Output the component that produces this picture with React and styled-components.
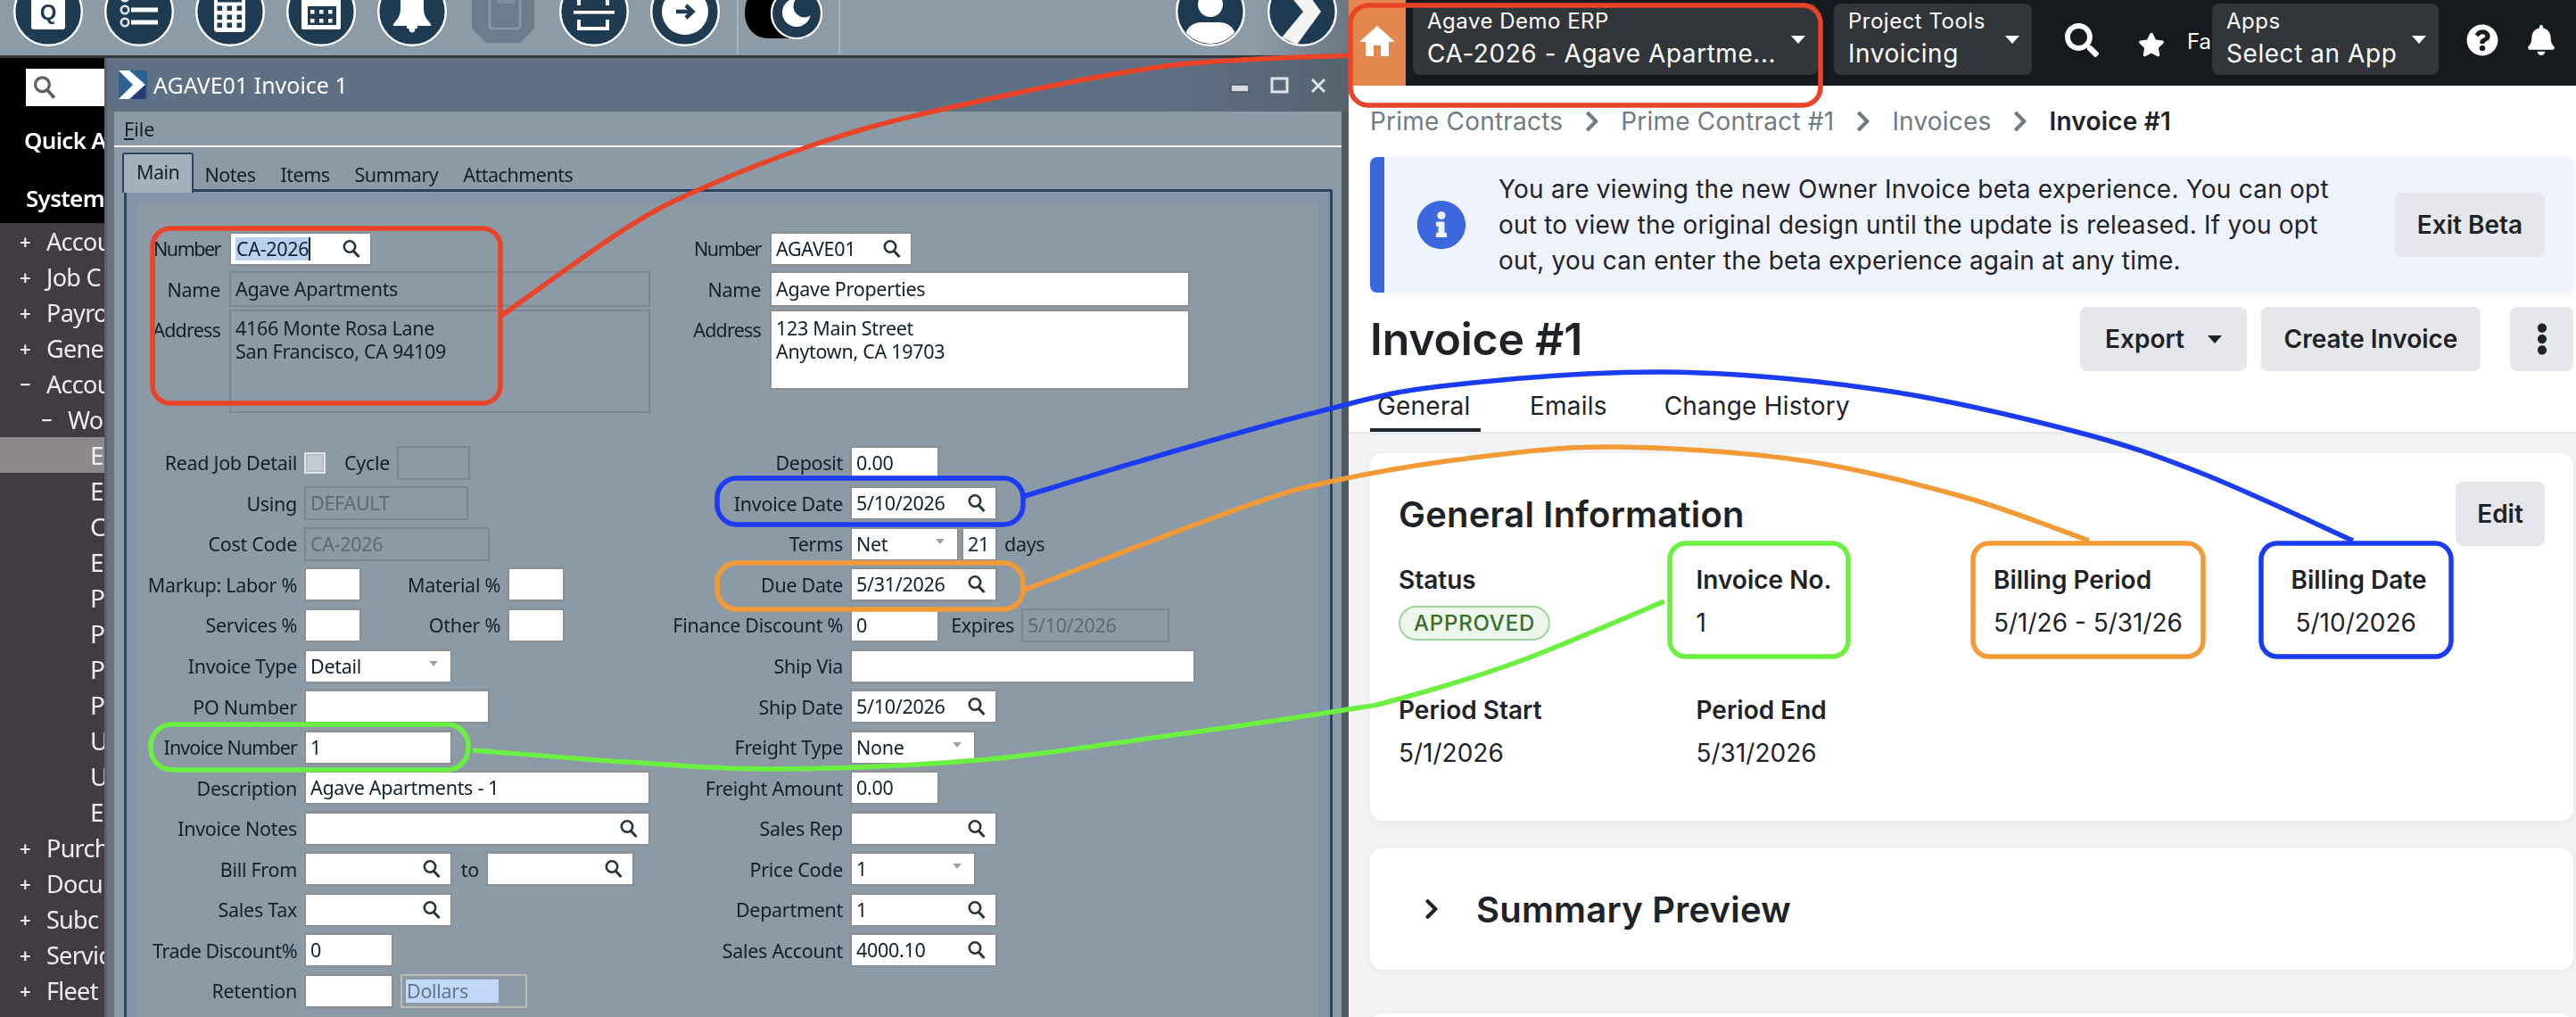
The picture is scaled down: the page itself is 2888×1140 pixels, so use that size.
import React from 'react';
import styled, { createGlobalStyle } from 'styled-components';
import { FaSearch, FaStar, FaQuestionCircle, FaBell, FaInfoCircle, FaChevronRight, FaEllipsisV } from 'react-icons/fa';

const Global = createGlobalStyle`
  html, body { margin: 0; padding: 0; background: #f2f3f5; }
  #root { width: 2888px; height: 1140px; }
  * { box-sizing: border-box; }
`;

const Page = styled.div`
  position: relative; width: 2888px; height: 1140px; overflow: hidden;
  display: grid; grid-template-columns: 1512px 1376px;
`;

/* ---------- legacy desktop ---------- */
const Legacy = styled.div`
  height: 1140px; display: flex; flex-direction: column; overflow: hidden;
  font-family: "Noto Sans", sans-serif; font-size: 21.5px; color: #10202c; background: #8c9aa6;
  filter: blur(0.45px);
`;
const Toolbar = styled.div`
  height: 65px; flex: none; display: flex; align-items: flex-start; padding: 0 13px 0 15px;
  background: linear-gradient(90deg, #8d9ba7 93%, #6a7783 100%);
  border-bottom: 3px solid #33383c; overflow: hidden;
`;
const RoundIcon = styled.svg`
  width: 78px; height: 78px; flex: none; margin-top: -26px; margin-right: ${p => p.$mr ?? 24}px;
`;
const Sep = styled.div`
  width: 2px; height: 60px; background: #a9b1b8; flex: none; margin-left: ${p => p.$ml}px; margin-right: ${p => p.$mr ?? 0}px;
`;
const Spacer = styled.div`flex: 1;`;
const Pill = styled.svg`width: 92px; height: 44px; flex: none;`;

const Body = styled.div`flex: 1; display: flex; min-height: 0;`;
const Side = styled.div`width: 120px; flex: none; background: #433b43; color: #f0ecf0; overflow: hidden; font-size: 27px; letter-spacing: -0.7px; border-right: 3px solid #59636b;`;
const SideTop = styled.div`height: 185px; background: #000; padding: 12px 0 0 29px; color: #fff; font-weight: 600; font-size: 26px; white-space: nowrap;`;
const SideSearch = styled.div`
  width: 89px; height: 42px; background: #fff; display: flex; align-items: center; padding-left: 7px; margin-bottom: 16px;
`;
const SideHead = styled.div`height: 65px; line-height: 44px; margin-left: ${p => p.$ml ?? 0}px;`;
const SideRow = styled.div`
  height: 40px; display: flex; align-items: center; white-space: nowrap; overflow: hidden;
  padding-left: ${p => p.$level * 24 + 22}px;
  background: ${p => (p.$sel ? '#8c888b' : 'transparent')};
`;
const Sign = styled.span`width: 30px; flex: none; font-size: 22px; font-weight: 600;`;
const Lvl3 = styled.span`margin-left: 7px; font-size: 28px;`;

const Win = styled.div`flex: 1; display: flex; flex-direction: column; min-width: 0;`;
const TitleBar = styled.div`
  height: 60px; flex: none; background: linear-gradient(90deg, #5f7084 85%, #55636f 100%); color: #fff; display: flex; align-items: center;
  padding-left: 13px; font-size: 25px;
`;
const Logo = styled.svg`width: 32px; height: 32px; margin-right: 7px; flex: none;`;
const WinCtl = styled.svg`width: 110px; height: 30px; margin-left: auto; margin-right: 24px;`;
const WinBody = styled.div`
  flex: 1; min-height: 0; margin-left: 0; background: #8c9aa6;
  border-left: 8px solid #66757f; border-right: 8px solid #4f5a62;
  display: flex; flex-direction: column;
`;
const Menu = styled.div`height: 40px; flex: none; padding-left: 11px; display: flex; align-items: center; border-bottom: 2px solid #f2f4f6;`;
const Under = styled.span`text-decoration: underline;`;
const TabRow = styled.div`height: 49px; flex: none; padding: 6px 0 0 9px; display: flex; position: relative; z-index: 1; margin-bottom: -2px; letter-spacing: -0.5px;`;
const WinTab = styled.div`
  display: flex; align-items: center; height: 45px; padding: ${p => (p.$on ? '0 14px 4px' : '4px 14px 0')};
  background: ${p => (p.$on ? '#a3b1bf' : 'transparent')};
  border: ${p => (p.$on ? '2px solid #2a4560' : 'none')};
  border-bottom: none; border-radius: 3px 3px 0 0;
  margin-right: ${p => (p.$on ? -2 : 0)}px;
`;
const Panel = styled.div`
  flex: 1; min-height: 0; margin: 0 10px 0 11px; background: #8495a8;
  border: 3px solid #2a4560; border-bottom: none; border-radius: 3px 3px 0 0; padding: 12px 14px 0 12px;
`;
const Form = styled.div`height: 100%; background: #8c9aa6; padding-top: 29px;`;
const Pair = styled.div`display: flex; height: ${p => p.$h}px;`;
const Col = styled.div`width: 600px; flex: none; --lw: ${p => p.$lw}px; --gap: ${p => p.$gap}px;`;
const Row = styled.div`
  height: ${p => p.$h ?? 45.55}px; display: flex; align-items: ${p => (p.$top ? 'flex-start' : 'center')}; gap: 8px; white-space: nowrap; letter-spacing: -0.3px;
`;
const Lab = styled.div`
  width: var(--lw); margin-right: calc(var(--gap) - 8px); flex: none; text-align: right; padding-top: ${p => p.$pt ?? 0}px;
  letter-spacing: ${p => p.$ls ?? -0.3}px;
`;
const InlineLab = styled.div`width: ${p => p.$w}px; flex: none; text-align: right; margin-left: ${p => p.$ml ?? 0}px;`;
const Input = styled.div`
  width: ${p => p.$w}px; height: ${p => p.$h ?? 38}px; flex: none; display: flex; align-items: ${p => (p.$multi ? 'flex-start' : 'center')};
  margin-left: ${p => p.$ml ?? 0}px;
  padding: ${p => (p.$multi ? '6px 5px' : '0 5px')}; line-height: 26px;
  background: ${p => (p.$off ? 'transparent' : '#fff')}; color: ${p => (p.$off && !p.$ink ? '#5d6a76' : '#10202c')};
  border: 2px solid ${p => (p.$off ? '#7d8791' : '#8b8f93')};
`;
const Selected = styled.span`
  background: ${p => p.$c}; padding: 0 ${p => p.$pr ?? 1}px 0 1px;
`;
const TextCaret = styled.span`display: inline-block; width: 2px; height: 26px; background: #10202c; margin-left: -1px;`;
const Drop = styled.span`
  margin-left: auto; margin-right: 9px; width: 0; height: 0; align-self: flex-start; margin-top: 11px;
  border-left: 5px solid transparent; border-right: 5px solid transparent; border-top: 6px solid #9aa3ac;
`;
const Glass = styled.svg`width: ${p => p.$s ?? 22}px; height: ${p => p.$s ?? 22}px; margin-left: ${p => (p.$flush ? 0 : 'auto')}; margin-right: ${p => p.$mr ?? 5}px; flex: none;`;
const GlassIcon = ({ mr, s, flush, c = '#26343e' }) => (
  <Glass viewBox="0 0 22 22" $mr={mr} $s={s} $flush={flush}>
    <circle cx="9" cy="8.5" r="6.2" fill="none" stroke={c} strokeWidth="2.6" />
    <line x1="13.4" y1="13.4" x2="19.5" y2="20" stroke={c} strokeWidth="3" />
  </Glass>
);
const Check = styled.div`width: 24px; height: 24px; background: #c3ccd2; border: 2px solid #dfe3e6; box-shadow: inset 0 0 0 2px #b4bcc3; flex: none;`;
const Dollars = styled(Input)`border-color: #b7bdb4; color: #66758c; padding-left: 4px;`;
const Unit = styled.span`flex: none;`;

const F = ({ label, ls, children }) => (
  <Row>
    <Lab $ls={ls}>{label}</Lab>
    {children}
  </Row>
);

/* ---------- portal ---------- */
const Portal = styled.div`
  height: 1140px; overflow: hidden; background: #fff; font-family: Inter, "Noto Sans", sans-serif; font-size: 28px; color: #1f2327;
`;
const TopNav = styled.div`height: 96px; background: #16191d; display: flex; align-items: flex-start; color: #fff;`;
const HomeTile = styled.div`width: 64px; height: 96px; background: #e4874f; display: flex; align-items: center; justify-content: center; flex: none;`;
const HomeGlyph = styled.svg`width: 40px; height: 34px; margin-top: -5px;`;
const NavSelect = styled.div`
  width: ${p => p.$w}px; margin-left: ${p => p.$ml}px; height: 80px; margin-top: 4px; flex: none; background: #32363a; border-radius: 8px;
  display: flex; align-items: center; justify-content: space-between; padding: 0 14px 0 16px;
`;
const NavText = styled.div`display: flex; flex-direction: column; white-space: nowrap; padding-bottom: 4px;`;
const NavSmall = styled.span`font-size: 24px; line-height: 36px; letter-spacing: 0.5px;`;
const NavBig = styled.span`font-size: 28px; line-height: 36px; letter-spacing: 0.55px;`;
const Caret = styled.span`
  width: 0; height: 0; flex: none; margin-left: ${p => p.$ml ?? 0}px;
  border-left: 8px solid transparent; border-right: 8px solid transparent; border-top: 9px solid ${p => p.$c ?? '#fff'};
`;
const NavIcon = styled.div`flex: none; margin-left: ${p => p.$ml}px; margin-top: ${p => p.$mt}px; display: flex; font-size: ${p => p.$s}px;`;
const Fa = styled.div`width: 28px; margin-left: 25px; margin-top: 32px; overflow: hidden; font-size: 24px; line-height: 30px; flex: none;`;

const Crumbs = styled.div`height: 80px; display: flex; align-items: center; padding-left: 24px; color: #6f7b83; white-space: nowrap;`;
const Crumb = styled.span`
  font-weight: ${p => (p.$cur ? 600 : 400)}; color: ${p => (p.$cur ? '#1f2327' : '#6f7b83')}; letter-spacing: 0.2px;
`;
const CrumbSep = styled.span`display: flex; margin: 0 19.5px; color: #6f7b83; font-size: 26px;`;
const Content = styled.div`padding: 0 3px 0 24px;`;
const Banner = styled.div`
  height: 152px; display: flex; align-items: center; background: #eff3fd; border-left: 16px solid #3b68dd; border-radius: 8px;
  padding: 0 32px 0 36px; box-shadow: 0 2px 10px rgba(40, 50, 70, 0.08);
`;
const InfoWrap = styled.div`display: flex; color: #3b68dd; font-size: 56px; flex: none; margin-right: 36px;`;
const BannerText = styled.div`width: 960px; flex: none; line-height: 40px; letter-spacing: 0.22px;`;
const Btn = styled.div`
  height: 72px; display: flex; align-items: center; justify-content: center; background: #e5e7ea; border-radius: 8px;
  font-weight: 600; padding: 0 24px; width: ${p => (p.$w ? `${p.$w}px` : 'auto')}; flex: none; margin-left: ${p => p.$ml ?? 0}px; white-space: nowrap;
`;
const KebabBtn = styled(Btn)`font-size: 36px; padding: 0;`;
const HeadRow = styled.div`display: flex; align-items: center; height: 72px; margin-top: 16px;`;
const PageTitle = styled.h1`margin: 0; font-size: 50px; font-weight: 600; letter-spacing: -0.2px;`;
const Actions = styled.div`margin-left: auto; display: flex; gap: 16px;`;
const TabBar = styled.div`height: 68px; display: flex; align-items: flex-end;`;
const PTab = styled.div`
  height: 62px; padding: 8px 8px 0; margin-right: ${p => p.$mr}px; display: flex; align-items: center; white-space: nowrap;
  letter-spacing: 0.2px; border-bottom: 4px solid ${p => (p.$on ? '#22262a' : 'transparent')};
  width: ${p => (p.$on ? '124px' : 'auto')};
`;
const Gray = styled.div`
  height: 656px; background: #f2f3f5; padding: 24px 3px 0 24px; display: flex; flex-direction: column;
  box-shadow: inset 0 6px 6px -6px rgba(0, 0, 0, 0.1);
`;
const Card = styled.div`
  height: ${p => p.$h}px; flex: none; margin-bottom: ${p => p.$mb ?? 0}px; background: #fff; border-radius: 14px; box-shadow: 0 2px 8px rgba(40, 50, 60, 0.07);
`;
const GeneralCard = styled(Card)`padding: 32px;`;
const CardHead = styled.div`display: flex; justify-content: space-between; align-items: center; height: 72px; margin-bottom: 14px;`;
const CardTitle = styled.h2`margin: 0; font-size: 40px; font-weight: 600; letter-spacing: 0.2px;`;
const InfoGrid = styled.div`display: grid; grid-template-columns: repeat(4, 333.5px); row-gap: 50px;`;
const Item = styled.div`line-height: 48px; white-space: nowrap;`;
const ItemLabel = styled.div`font-weight: 600; font-size: 28px;`;
const ItemValue = styled.div`padding-left: ${p => p.$pl ?? 0}px; font-size: 28px;`;
const Badge = styled.div`
  width: 170px; height: 39px; margin-top: 5px; display: flex; align-items: center; justify-content: center; border-radius: 20px;
  background: #ecf6ea; border: 2px solid #a3d3a0; color: #3c6e2e; font-size: 24px; font-weight: 500; letter-spacing: 0.8px;
`;
const SummaryCard = styled(Card)`display: flex; align-items: center; padding-left: 56px; font-size: 40px; font-weight: 600; letter-spacing: 0.2px;`;
const SumChev = styled.span`display: flex; font-size: 26px; margin-right: 37px;`;

/* ---------- annotations ---------- */
const Overlay = styled.svg`position: absolute; left: 0; top: 0; width: 2888px; height: 1140px; pointer-events: none;`;

const spline = pts => {
  let d = `M${pts[0][0]} ${pts[0][1]}`;
  for (let i = 0; i < pts.length - 1; i++) {
    const p0 = pts[i - 1] || pts[i];
    const p1 = pts[i];
    const p2 = pts[i + 1];
    const p3 = pts[i + 2] || p2;
    d += ` C${p1[0] + (p2[0] - p0[0]) / 6} ${p1[1] + (p2[1] - p0[1]) / 6} ${p2[0] - (p3[0] - p1[0]) / 6} ${p2[1] - (p3[1] - p1[1]) / 6} ${p2[0]} ${p2[1]}`;
  }
  return d;
};

const RED = '#ea4327', GREEN = '#6bf042', ORANGE = '#f29a36', BLUE = '#1a3cf5';
const curves = [
  [RED, [[562, 354], [700, 257], [785, 212], [910, 163], [1050, 124], [1300, 75], [1514, 62]]],
  [GREEN, [[530, 841], [700, 854], [870, 862], [1098, 852], [1300, 826], [1500, 797], [1570, 783], [1704, 741], [1866, 674]]],
  [BLUE, [[1149, 556], [1312, 507], [1480, 461], [1615, 433], [1866, 417], [2108, 437], [2324, 483], [2467, 530], [2638, 606]]],
  [ORANGE, [[1149, 661], [1389, 570], [1500, 538], [1660, 512], [1812, 501], [2019, 516], [2198, 556], [2342, 606]]],
];
const boxes = [
  [RED, 1514, 6, 527, 112, 20],
  [RED, 171, 256, 390, 196, 20],
  [GREEN, 169, 812, 356, 51, 24],
  [BLUE, 804, 536, 343, 52, 22],
  [ORANGE, 804, 631, 343, 52, 22],
  [GREEN, 1872, 609, 200, 127, 18],
  [ORANGE, 2212, 609, 258, 127, 18],
  [BLUE, 2535, 609, 213, 127, 18],
];

const Disc = ({ children, mr }) => (
  <RoundIcon viewBox="0 0 78 78" $mr={mr}>
    <circle cx="39" cy="39" r="37.8" fill="#1f3b51" stroke="#fff" strokeWidth="2.4" />
    {children}
  </RoundIcon>
);

const BottomRows = [
  ['Purch'], ['Docu'], ['Subc'], ['Servic'], ['Fleet'],
];

export default function App() {
  return (
    <Page>
      <Global />
      <Legacy>
        <Toolbar>
          <Disc>
            <path d="M20 0H50L58 10V56a3 3 0 0 1-3 3H23a3 3 0 0 1-3-3Z" fill="#fff" />
            <text x="39" y="48" textAnchor="middle" fontFamily="Liberation Sans" fontWeight="700" fontSize="24" fill="#1f3b51">Q</text>
          </Disc>
          <Disc>
            {[23, 37, 51].map(y => (
              <g key={y}>
                <circle cx="23" cy={y} r="4.2" fill="none" stroke="#dfe4e8" strokeWidth="2.6" />
                <rect x="30" y={y - 2.5} width="30" height="5" fill="#fff" />
              </g>
            ))}
          </Disc>
          <Disc>
            <rect x="21" y="-6" width="35" height="68" rx="4" fill="#fff" />
            <rect x="25" y="26" width="27" height="2.5" fill="#1f3b51" />
            {[35, 45, 54].map(y => [27, 38, 49].map(x => <rect key={`${x}${y}`} x={x - 2.5} y={y - 2.5} width="5.5" height="5.5" fill="#1f3b51" />))}
          </Disc>
          <Disc>
            <rect x="17" y="10" width="44" height="49" rx="2" fill="#fff" />
            <rect x="24" y="33" width="32" height="21" fill="#1f3b51" />
            {[39, 49].map(y => [29, 39, 49].map(x => <rect key={`${x}${y}`} x={x - 2} y={y - 2} width="4.5" height="4.5" fill="#fff" />))}
          </Disc>
          <Disc>
            <path d="M26 8H52V36C52 44 56 48 60 53V55H18V53C22 48 26 44 26 36Z" fill="#fff" />
            <rect x="33" y="55" width="12" height="3" fill="#fff" />
            <circle cx="39" cy="59" r="3.4" fill="#fff" />
          </Disc>
          <RoundIcon viewBox="0 0 78 78">
            <path d="M4 20L20 4H58L74 20V58L58 74H20L4 58Z" fill="#6c7d8c" />
            <rect x="24" y="8" width="34" height="50" rx="3" fill="none" stroke="#8c9aa6" strokeWidth="2.5" />
            <rect x="32" y="24" width="20" height="6" fill="#7f8f9d" />
          </RoundIcon>
          <Disc>
            <rect x="12" y="38" width="46" height="3.6" fill="#fff" transform="translate(4 0)" />
            <path d="M22 32V10H46L54 18V32" fill="none" stroke="#fff" strokeWidth="4" />
            <path d="M22 48V58H54V48" fill="none" stroke="#fff" strokeWidth="4" />
          </Disc>
          <Disc mr={0}>
            <circle cx="39" cy="39" r="26" fill="#fff" />
            <path d="M29 39H47M40 32L47.5 39L40 46" fill="none" stroke="#1f3b51" strokeWidth="4.5" />
          </Disc>
          <Sep $ml={19} $mr={5} />
          <Pill viewBox="0 0 92 44">
            <path d="M28 -6H70V43H28C14 43 2 32 2 14C2 5 5 -2 8 -6Z" fill="#000" />
            <circle cx="60" cy="15" r="28" fill="#1f3b51" stroke="#fff" strokeWidth="2.2" />
            <circle cx="60" cy="14" r="16" fill="#fff" />
            <circle cx="69" cy="7" r="12.5" fill="#1f3b51" />
          </Pill>
          <Sep $ml={15} />
          <Spacer />
          <Disc mr={25}>
            <clipPath id="av"><circle cx="39" cy="39" r="36" /></clipPath>
            <circle cx="39" cy="31" r="14" fill="#fff" />
            <path d="M10 72C10 58 18 51 30 51H48C60 51 68 58 68 72C60 82 18 82 10 72Z" fill="#fff" clipPath="url(#av)" />
          </Disc>
          <Disc mr={0}>
            <path d="M16 10L33 2L60 39L33 76L16 68L40 39Z" fill="#f4f4f4" />
          </Disc>
        </Toolbar>
        <Body>
          <Side>
            <SideTop>
              <SideSearch><GlassIcon flush s={28} c="#5b6165" /></SideSearch>
              <SideHead $ml={-2}>Quick A</SideHead>
              <SideHead>System</SideHead>
            </SideTop>
            <SideRow $level={0}><Sign>+</Sign>Accou</SideRow>
            <SideRow $level={0}><Sign>+</Sign>Job C</SideRow>
            <SideRow $level={0}><Sign>+</Sign>Payro</SideRow>
            <SideRow $level={0}><Sign>+</Sign>Gener</SideRow>
            <SideRow $level={0}><Sign>−</Sign>Accou</SideRow>
            <SideRow $level={1}><Sign>−</Sign>Wo</SideRow>
            {['E', 'E', 'C', 'E', 'P', 'P', 'P', 'P', 'U', 'U', 'E'].map((t, i) => (
              <SideRow key={i} $level={3} $sel={i === 0}><Lvl3>{t}</Lvl3></SideRow>
            ))}
            {BottomRows.map(([t]) => (
              <SideRow key={t} $level={0}><Sign>+</Sign>{t}</SideRow>
            ))}
          </Side>
          <Win>
            <TitleBar>
              <Logo viewBox="0 0 32 32">
                <rect width="32" height="32" rx="3" fill="#2a6296" />
                <path d="M0 0H12L30 16L12 32H0L16 16Z" fill="#fff" />
                <path d="M18 27L30 16V29a3 3 0 0 1-3 3H14Z" fill="#243a70" />
              </Logo>
              AGAVE01 Invoice 1
              <WinCtl viewBox="0 0 110 30">
                <rect x="2" y="15" width="20" height="8" rx="1.5" fill="#d4dae2" stroke="#45505c" strokeWidth="1.4" />
                <rect x="48" y="8" width="17" height="15" fill="none" stroke="#dfe3e8" strokeWidth="3" />
                <path d="M93 9L107 23M107 9L93 23" stroke="#dfe3e8" strokeWidth="3" />
              </WinCtl>
            </TitleBar>
            <WinBody>
              <Menu><Under>F</Under>ile</Menu>
              <TabRow>
                <WinTab $on>Main</WinTab>
                <WinTab>Notes</WinTab>
                <WinTab>Items</WinTab>
                <WinTab>Summary</WinTab>
                <WinTab>Attachments</WinTab>
              </TabRow>
              <Panel>
                <Form>
                  <Pair $h={240}>
                    <Col $lw={93} $gap={10}>
                      <F label="Number" ls={-1.5}>
                        <Input $w={160}>
                          <Selected $c="#b9d0ee">CA-2026</Selected><TextCaret /><GlassIcon />
                        </Input>
                      </F>
                      <F label="Name"><Input $w={472} $off $ink $h={40}>Agave Apartments</Input></F>
                      <Row $h={120} $top>
                        <Lab $pt={8} $ls={-0.8}>Address</Lab>
                        <Input $w={472} $h={116} $off $ink $multi><div>4166 Monte Rosa Lane<br />San Francisco, CA 94109</div></Input>
                      </Row>
                    </Col>
                    <Col $lw={99} $gap={10}>
                      <F label="Number" ls={-1.5}><Input $w={160}>AGAVE01<GlassIcon /></Input></F>
                      <F label="Name"><Input $w={471} $h={40}>Agave Properties</Input></F>
                      <Row $h={120} $top>
                        <Lab $pt={8} $ls={-0.8}>Address</Lab>
                        <Input $w={471} $h={90} $multi><div>123 Main Street<br />Anytown, CA 19703</div></Input>
                      </Row>
                    </Col>
                  </Pair>
                  <Pair $h={640}>
                    <Col $lw={179} $gap={8}>
                      <F label="Read Job Detail">
                        <Check />
                        <InlineLab $w={62} $ml={2}>Cycle</InlineLab>
                        <Input $w={82} $off />
                      </F>
                      <F label="Using"><Input $w={184} $off>DEFAULT</Input></F>
                      <F label="Cost Code"><Input $w={208} $off>CA-2026</Input></F>
                      <F label="Markup: Labor %">
                        <Input $w={64} />
                        <InlineLab $w={148}>Material %</InlineLab>
                        <Input $w={64} />
                      </F>
                      <F label="Services %">
                        <Input $w={64} />
                        <InlineLab $w={148}>Other %</InlineLab>
                        <Input $w={64} />
                      </F>
                      <F label="Invoice Type"><Input $w={166}>Detail<Drop /></Input></F>
                      <F label="PO Number"><Input $w={208} /></F>
                      <F label="Invoice Number" ls={-0.9}><Input $w={166}>1</Input></F>
                      <F label="Description"><Input $w={388}>Agave Apartments - 1</Input></F>
                      <F label="Invoice Notes"><Input $w={388}><GlassIcon mr={6} /></Input></F>
                      <F label="Bill From">
                        <Input $w={166}><GlassIcon /></Input>
                        <InlineLab $w={22}>to</InlineLab>
                        <Input $w={166}><GlassIcon /></Input>
                      </F>
                      <F label="Sales Tax"><Input $w={166}><GlassIcon /></Input></F>
                      <F label="Trade Discount%" ls={-0.5}><Input $w={100}>0</Input></F>
                      <F label="Retention">
                        <Input $w={100} />
                        <Dollars $w={142} $off><Selected $c="#c2d8fa" $pr={34}>Dollars</Selected></Dollars>
                      </F>
                    </Col>
                    <Col $lw={191} $gap={8}>
                      <F label="Deposit"><Input $w={100}>0.00</Input></F>
                      <F label="Invoice Date"><Input $w={165}>5/10/2026<GlassIcon /></Input></F>
                      <F label="Terms">
                        <Input $w={122}>Net<Drop /></Input>
                        <Input $w={40} $ml={-5}>21</Input>
                        <Unit>days</Unit>
                      </F>
                      <F label="Due Date"><Input $w={165}>5/31/2026<GlassIcon /></Input></F>
                      <F label="Finance Discount %">
                        <Input $w={100}>0</Input>
                        <InlineLab $w={76}>Expires</InlineLab>
                        <Input $w={166} $off>5/10/2026</Input>
                      </F>
                      <F label="Ship Via"><Input $w={387} /></F>
                      <F label="Ship Date"><Input $w={165}>5/10/2026<GlassIcon /></Input></F>
                      <F label="Freight Type"><Input $w={141}>None<Drop /></Input></F>
                      <F label="Freight Amount"><Input $w={100}>0.00</Input></F>
                      <F label="Sales Rep"><Input $w={165}><GlassIcon /></Input></F>
                      <F label="Price Code"><Input $w={141}>1<Drop /></Input></F>
                      <F label="Department"><Input $w={165}>1<GlassIcon /></Input></F>
                      <F label="Sales Account"><Input $w={165}>4000.10<GlassIcon /></Input></F>
                    </Col>
                  </Pair>
                </Form>
              </Panel>
            </WinBody>
          </Win>
        </Body>
      </Legacy>

      <Portal>
        <TopNav>
          <HomeTile>
            <HomeGlyph viewBox="0 0 40 34">
              <path d="M20 0L40 18H33V34H24V22H16V34H7V18H0Z" fill="#fff" />
            </HomeGlyph>
          </HomeTile>
          <NavSelect $w={454} $ml={8}>
            <NavText><NavSmall>Agave Demo ERP</NavSmall><NavBig>CA-2026 - Agave Apartme...</NavBig></NavText>
            <Caret />
          </NavSelect>
          <NavSelect $w={222} $ml={18}>
            <NavText><NavSmall>Project Tools</NavSmall><NavBig>Invoicing</NavBig></NavText>
            <Caret />
          </NavSelect>
          <NavIcon $ml={37} $mt={26} $s={38}><FaSearch /></NavIcon>
          <NavIcon $ml={44} $mt={35} $s={30}><FaStar /></NavIcon>
          <Fa>Fa</Fa>
          <NavSelect $w={254} $ml={0}>
            <NavText><NavSmall>Apps</NavSmall><NavBig>Select an App</NavBig></NavText>
            <Caret />
          </NavSelect>
          <NavIcon $ml={31} $mt={27} $s={36}><FaQuestionCircle /></NavIcon>
          <NavIcon $ml={31} $mt={28} $s={34}><FaBell /></NavIcon>
        </TopNav>
        <Crumbs>
          <Crumb>Prime Contracts</Crumb>
          <CrumbSep><FaChevronRight /></CrumbSep>
          <Crumb>Prime Contract #1</Crumb>
          <CrumbSep><FaChevronRight /></CrumbSep>
          <Crumb>Invoices</Crumb>
          <CrumbSep><FaChevronRight /></CrumbSep>
          <Crumb $cur>Invoice #1</Crumb>
        </Crumbs>
        <Content>
          <Banner>
            <InfoWrap><FaInfoCircle /></InfoWrap>
            <BannerText>
              You are viewing the new Owner Invoice beta experience. You can opt out to view the original design until the update is released. If you opt out, you can enter the beta experience again at any time.
            </BannerText>
            <Spacer />
            <Btn $w={168}>Exit Beta</Btn>
          </Banner>
          <HeadRow>
            <PageTitle>Invoice #1</PageTitle>
            <Actions>
              <Btn $w={187}>Export<Caret $ml={26} $c="#1f2327" /></Btn>
              <Btn $w={246}>Create Invoice</Btn>
              <KebabBtn $w={71} $ml={17}><FaEllipsisV /></KebabBtn>
            </Actions>
          </HeadRow>
          <TabBar>
            <PTab $on $mr={47}>General</PTab>
            <PTab $mr={48}>Emails</PTab>
            <PTab $mr={0}>Change History</PTab>
          </TabBar>
        </Content>
        <Gray>
          <GeneralCard $h={412} $mb={31}>
            <CardHead>
              <CardTitle>General Information</CardTitle>
              <Btn $w={100}>Edit</Btn>
            </CardHead>
            <InfoGrid>
              <Item><ItemLabel>Status</ItemLabel><Badge>APPROVED</Badge></Item>
              <Item><ItemLabel>Invoice No.</ItemLabel><ItemValue>1</ItemValue></Item>
              <Item><ItemLabel>Billing Period</ItemLabel><ItemValue>5/1/26 - 5/31/26</ItemValue></Item>
              <Item><ItemLabel>Billing Date</ItemLabel><ItemValue $pl={5}>5/10/2026</ItemValue></Item>
              <Item><ItemLabel>Period Start</ItemLabel><ItemValue>5/1/2026</ItemValue></Item>
              <Item><ItemLabel>Period End</ItemLabel><ItemValue>5/31/2026</ItemValue></Item>
            </InfoGrid>
          </GeneralCard>
          <SummaryCard $h={136} $mb={49}>
            <SumChev><FaChevronRight /></SumChev>
            Summary Preview
          </SummaryCard>
          <Card $h={60} />
        </Gray>
      </Portal>

      <Overlay viewBox="0 0 2888 1140">
        {curves.map(([c, pts], i) => (
          <path key={i} d={spline(pts)} fill="none" stroke={c} strokeWidth="5.5" />
        ))}
        {boxes.map(([c, x, y, w, h, r], i) => (
          <rect key={i} x={x} y={y} width={w} height={h} rx={r} fill="none" stroke={c} strokeWidth="5.5" />
        ))}
      </Overlay>
    </Page>
  );
}
